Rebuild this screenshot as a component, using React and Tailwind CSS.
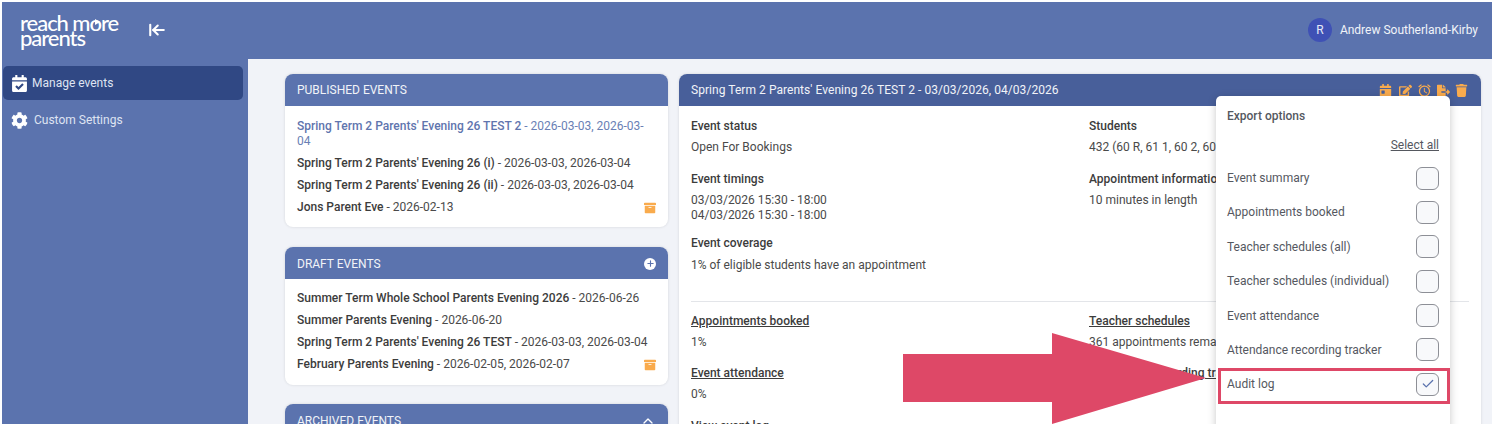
import React from "react";
import { Check, ChevronUp, Plus } from "lucide-react";
import { FaCalendarCheck, FaCog, FaArchive, FaTrash, FaFileExport, FaEdit, FaCalendarDay } from "react-icons/fa";
import { MdAlarm } from "react-icons/md";
import { LuArrowLeftToLine } from "react-icons/lu";

const Ev = ({ name, date, blue, archive, cls = "" }) => (
  <div className={`flex justify-between items-center text-[12px] leading-[15px] ${cls}`}>
    <div className={blue ? "text-[#6a7fb5]" : "text-[#4a4a4a]"}>
      <span className={blue ? "font-medium text-[#5f75ae]" : "font-medium text-[#3c3c3c]"}>{name}</span> - {date}
    </div>
    {archive && <FaArchive className="text-[#f9ab4d] text-[12px] shrink-0" />}
  </div>
);

const Card = ({ title, right, children, cls = "", tcls = "" }) => (
  <section className={`bg-white rounded-lg shadow-[0_0_3px_rgba(0,0,0,0.12)] overflow-hidden ${cls}`}>
    <div className={`h-[32px] bg-[#5b73ae] text-[#f1f3f8] text-[12px] flex items-center justify-between pl-[12px] pr-[12px] ${tcls}`}>
      <span>{title}</span>
      {right}
    </div>
    {children}
  </section>
);

const Field = ({ label, children, u, cls = "", gap = "mt-[7px]" }) => (
  <div className={`text-[12px] leading-[15px] text-[#4a4a4a] ${cls}`}>
    <div className={`font-medium text-[#3c3c3c] ${u ? "underline" : ""}`}>{label}</div>
    <div className={gap}>{children}</div>
  </div>
);

const Opt = ({ label, checked, cls = "" }) => (
  <div className={`flex items-center justify-between text-[12px] text-[#55585f] h-[24px] ${cls}`}>
    <span>{label}</span>
    <span className="w-[23px] h-[23px] rounded-[6px] border border-[#8d8f96] bg-[#f8f9fb] flex items-center justify-center">
      {checked && <Check size={14} strokeWidth={2.2} className="text-[#5b73ae]" />}
    </span>
  </div>
);

export default function App() {
  return (
    <div className="relative w-[1492px] h-[424px] overflow-hidden bg-white pt-[2px] pl-[2px] font-['Roboto',sans-serif]">
      <header className="h-[57px] bg-[#5b73ae] flex items-center justify-between pr-[14px] pb-[2px]">
        <div className="flex items-center">
          <div className="relative ml-[18px] w-[110px] text-white font-['Lato',sans-serif] font-medium text-[22px] leading-[15px] tracking-[-1.05px]">
            <div>reach more</div>
            <div>parents</div>
            <span className="absolute left-[75px] top-[4px] w-0 h-0 border-y-[3px] border-y-transparent border-l-[5px] border-l-white" />
          </div>
          <LuArrowLeftToLine className="ml-[18px] text-white text-[18px]" strokeWidth={2.8} />
        </div>
        <div className="flex items-center gap-[8px]">
          <span className="w-[24px] h-[24px] rounded-full bg-[#3f51b5] text-[#e6e9f7] text-[12px] flex items-center justify-center">R</span>
          <span className="text-[12px] text-[#f1f3f8]">Andrew Southerland-Kirby</span>
        </div>
      </header>
      <div className="flex h-[365px]">
        <aside className="w-[246px] bg-[#5b73ae] shrink-0 pt-[7px] pr-[5px] pl-[1px]">
          <div className="h-[34px] rounded-[5px] bg-[#304884] flex items-center pl-[8px] gap-[4px] text-[12px] text-[#dfe4f2]">
            <FaCalendarCheck className="text-white text-[17px]" />
            <span>Manage events</span>
          </div>
          <div className="h-[34px] mt-[3px] flex items-center pl-[8px] gap-[6px] text-[12px] text-[#dfe4f2]">
            <FaCog className="text-white text-[17px]" />
            <span>Custom Settings</span>
          </div>
        </aside>
        <main className="flex-1 bg-[#f1f3f8] pl-[37px] pt-[15px] pr-[9px] flex gap-[11px] items-start">
          <div className="w-[383px] shrink-0 flex flex-col">
            <Card title="PUBLISHED EVENTS">
              <div className="px-[12px] pt-[13px] h-[121px]">
                <Ev blue name="Spring Term 2 Parents' Evening 26 TEST 2" date="2026-03-03, 2026-03-04" />
                <Ev cls="mt-[7px]" name="Spring Term 2 Parents' Evening 26 (i)" date="2026-03-03, 2026-03-04" />
                <Ev cls="mt-[7px]" name="Spring Term 2 Parents' Evening 26 (ii)" date="2026-03-03, 2026-03-04" />
                <Ev cls="mt-[7px]" archive name="Jons Parent Eve" date="2026-02-13" />
              </div>
            </Card>
            <Card
              cls="mt-[20px]"
              tcls="pt-[1px]"
              title="DRAFT EVENTS"
              right={<span className="w-[12px] h-[12px] rounded-full bg-white flex items-center justify-center"><Plus size={9} strokeWidth={3} className="text-[#5b73ae]" /></span>}
            >
              <div className="px-[12px] pt-[12px] h-[106px]">
                <Ev name="Summer Term Whole School Parents Evening 2026" date="2026-06-26" />
                <Ev cls="mt-[7px]" name="Summer Parents Evening" date="2026-06-20" />
                <Ev cls="mt-[7px]" name="Spring Term 2 Parents' Evening 26 TEST" date="2026-03-03, 2026-03-04" />
                <Ev cls="mt-[7px]" archive name="February Parents Evening" date="2026-02-05, 2026-02-07" />
              </div>
            </Card>
            <Card cls="mt-[19px]" tcls="pt-[2px] pr-[10px]" title="ARCHIVED EVENTS" right={<ChevronUp size={16} className="text-white" />} />
          </div>
          <section className="w-[802px] shrink-0 h-[400px] bg-white rounded-lg shadow-[0_0_3px_rgba(0,0,0,0.12)] overflow-hidden">
            <div className="h-[32px] bg-[#485f9a] text-[#f1f3f8] text-[12px] flex items-center justify-between pl-[12px] pr-[13px]">
              <span className="tracking-[0.05px]">Spring Term 2 Parents' Evening 26 TEST 2 - 03/03/2026, 04/03/2026</span>
              <span className="flex items-center gap-[5px] text-[#f9ab4d] text-[13px]">
                <FaCalendarDay className="mr-[2px]" />
                <FaEdit />
                <MdAlarm className="text-[15px]" />
                <FaFileExport />
                <FaTrash />
              </span>
            </div>
            <div className="px-[12px] pt-[13px]">
              <div className="grid grid-cols-[398px_1fr] h-[183px] border-b border-[#e3e5e9]">
                <div>
                  <Field label="Event status" gap="mt-[6px]">Open For Bookings</Field>
                  <Field label="Event timings" gap="mt-[6px]" cls="mt-[17px]">
                    <div>03/03/2026 15:30 - 18:00</div>
                    <div>04/03/2026 15:30 - 18:00</div>
                  </Field>
                  <Field label="Event coverage" cls="mt-[13px]">1% of eligible students have an appointment</Field>
                </div>
                <div>
                  <Field label="Students" gap="mt-[6px]">432 (60 R, 61 1, 60 2, 60 3, 60 4, 60 5, 71 6)</Field>
                  <Field label="Appointment information" gap="mt-[6px]" cls="mt-[17px]">10 minutes in length</Field>
                </div>
              </div>
              <div className="grid grid-cols-[398px_1fr] pt-[12px]">
                <div>
                  <Field u label="Appointments booked" gap="mt-[6px]">1%</Field>
                  <Field u label="Event attendance" gap="mt-[6px]" cls="mt-[16px]">0%</Field>
                  <Field label="View event log" cls="mt-[17px]"> </Field>
                </div>
                <div>
                  <Field u label="Teacher schedules" gap="mt-[6px]">361 appointments remaining</Field>
                  <Field u label="Attendance recording tracker" cls="mt-[16px]"> </Field>
                </div>
              </div>
            </div>
          </section>
        </main>
      </div>

      <div className="absolute left-[1216px] top-[96px] w-[234px] h-[340px] bg-white rounded-[5px] shadow-[0_2px_8px_rgba(0,0,0,0.22)] px-[11px] pt-[13px]">
        <div className="text-[12px] font-medium text-[#55585f] leading-[15px]">Export options</div>
        <div className="text-right text-[12px] text-[#55585f] underline leading-[15px] mt-[14px]">Select all</div>
        <Opt cls="mt-[13px]" label="Event summary" />
        <Opt cls="mt-[10.4px]" label="Appointments booked" />
        <Opt cls="mt-[10.4px]" label="Teacher schedules (all)" />
        <Opt cls="mt-[10.4px]" label="Teacher schedules (individual)" />
        <Opt cls="mt-[10.4px]" label="Event attendance" />
        <Opt cls="mt-[10.4px]" label="Attendance recording tracker" />
        <Opt cls="mt-[10.4px]" checked label="Audit log" />
      </div>

      <div className="absolute left-[1218px] top-[368px] w-[232px] h-[36px] border-[3px] border-[#de4867]" />
      <svg className="absolute left-[903px] top-[333px]" width="304" height="91" viewBox="0 0 304 91">
        <path d="M0 21 H149 V0 L303 45 L149 91 V69 H0 Z" fill="#de4867" />
      </svg>
    </div>
  );
}
